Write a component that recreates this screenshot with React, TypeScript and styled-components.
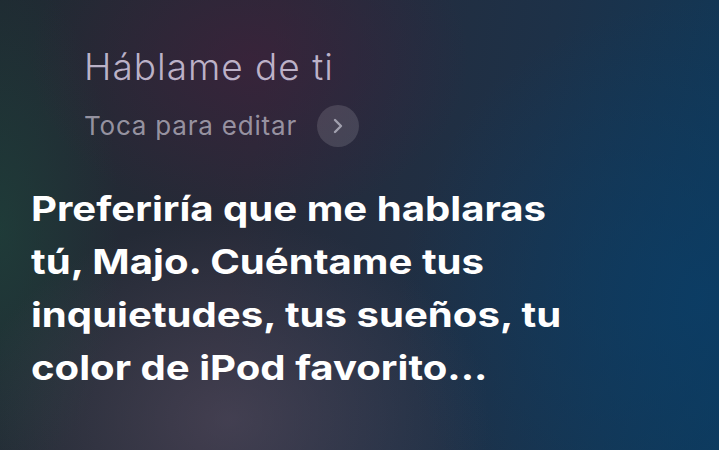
import React from "react";
import styled, { createGlobalStyle } from "styled-components";

const Global = createGlobalStyle`
  html, body { margin: 0; padding: 0; background: #1d2733; }
  #root { width: 719px; height: 450px; }
`;

const Screen = styled.div`
  width: 719px;
  height: 450px;
  overflow: hidden;
  box-sizing: border-box;
  padding: 45px 0 0 0;
  display: flex;
  flex-direction: column;
  font-family: Inter, "Liberation Sans", sans-serif;
  background:
    radial-gradient(ellipse 220px 160px at 250px 60px, rgba(70, 30, 60, 0.55), rgba(70, 30, 60, 0) 100%),
    radial-gradient(ellipse 260px 200px at 230px 420px, rgba(90, 80, 100, 0.55), rgba(90, 80, 100, 0) 100%),
    radial-gradient(ellipse 120px 260px at 0px 230px, rgba(30, 70, 60, 0.6), rgba(30, 70, 60, 0) 100%),
    radial-gradient(ellipse 300px 300px at 700px 300px, rgba(10, 62, 104, 0.75), rgba(10, 62, 104, 0) 100%),
    linear-gradient(100deg, #1f2a32 0%, #272a38 35%, #1d3148 70%, #0f395a 100%);
`;

const Query = styled.div`
  padding-left: 84px;
  display: flex;
  flex-direction: column;
`;

const QueryText = styled.div`
  font-size: 37px;
  font-weight: 300;
  line-height: 44px;
  color: rgba(214, 204, 226, 0.86);
  letter-spacing: 1px;
`;

const EditRow = styled.div`
  display: flex;
  align-items: center;
  gap: 20px;
  margin-top: 16px;
`;

const EditText = styled.div`
  font-size: 26px;
  font-weight: 400;
  line-height: 30px;
  color: rgba(180, 176, 190, 0.8);
  letter-spacing: 0.8px;
`;

const Chevron = styled.div`
  width: 42px;
  height: 42px;
  border-radius: 50%;
  background: rgba(255, 255, 255, 0.13);
  display: flex;
  align-items: center;
  justify-content: center;
`;

const Answer = styled.div`
  margin-top: 35px;
  padding-left: 31px;
  font-size: 34px;
  font-weight: 700;
  line-height: 53px;
  color: #ffffff;
  transform: scaleX(1.18);
  transform-origin: 31px top;
`;

export default function App() {
  return (
    <>
      <Global />
      <Screen>
        <Query>
          <QueryText>Háblame de ti</QueryText>
          <EditRow>
            <EditText>Toca para editar</EditText>
            <Chevron>
              <svg width="12" height="18" viewBox="0 0 12 18">
                <path d="M3 3 L9 9 L3 15" fill="none" stroke="rgba(200,200,212,0.7)" strokeWidth="2.4" strokeLinecap="round" strokeLinejoin="round" />
              </svg>
            </Chevron>
          </EditRow>
        </Query>
        <Answer>
          Preferiría que me hablaras
          <br />
          tú, Majo. Cuéntame tus
          <br />
          inquietudes, tus sueños, tu
          <br />
          color de iPod favorito...
        </Answer>
      </Screen>
    </>
  );
}
